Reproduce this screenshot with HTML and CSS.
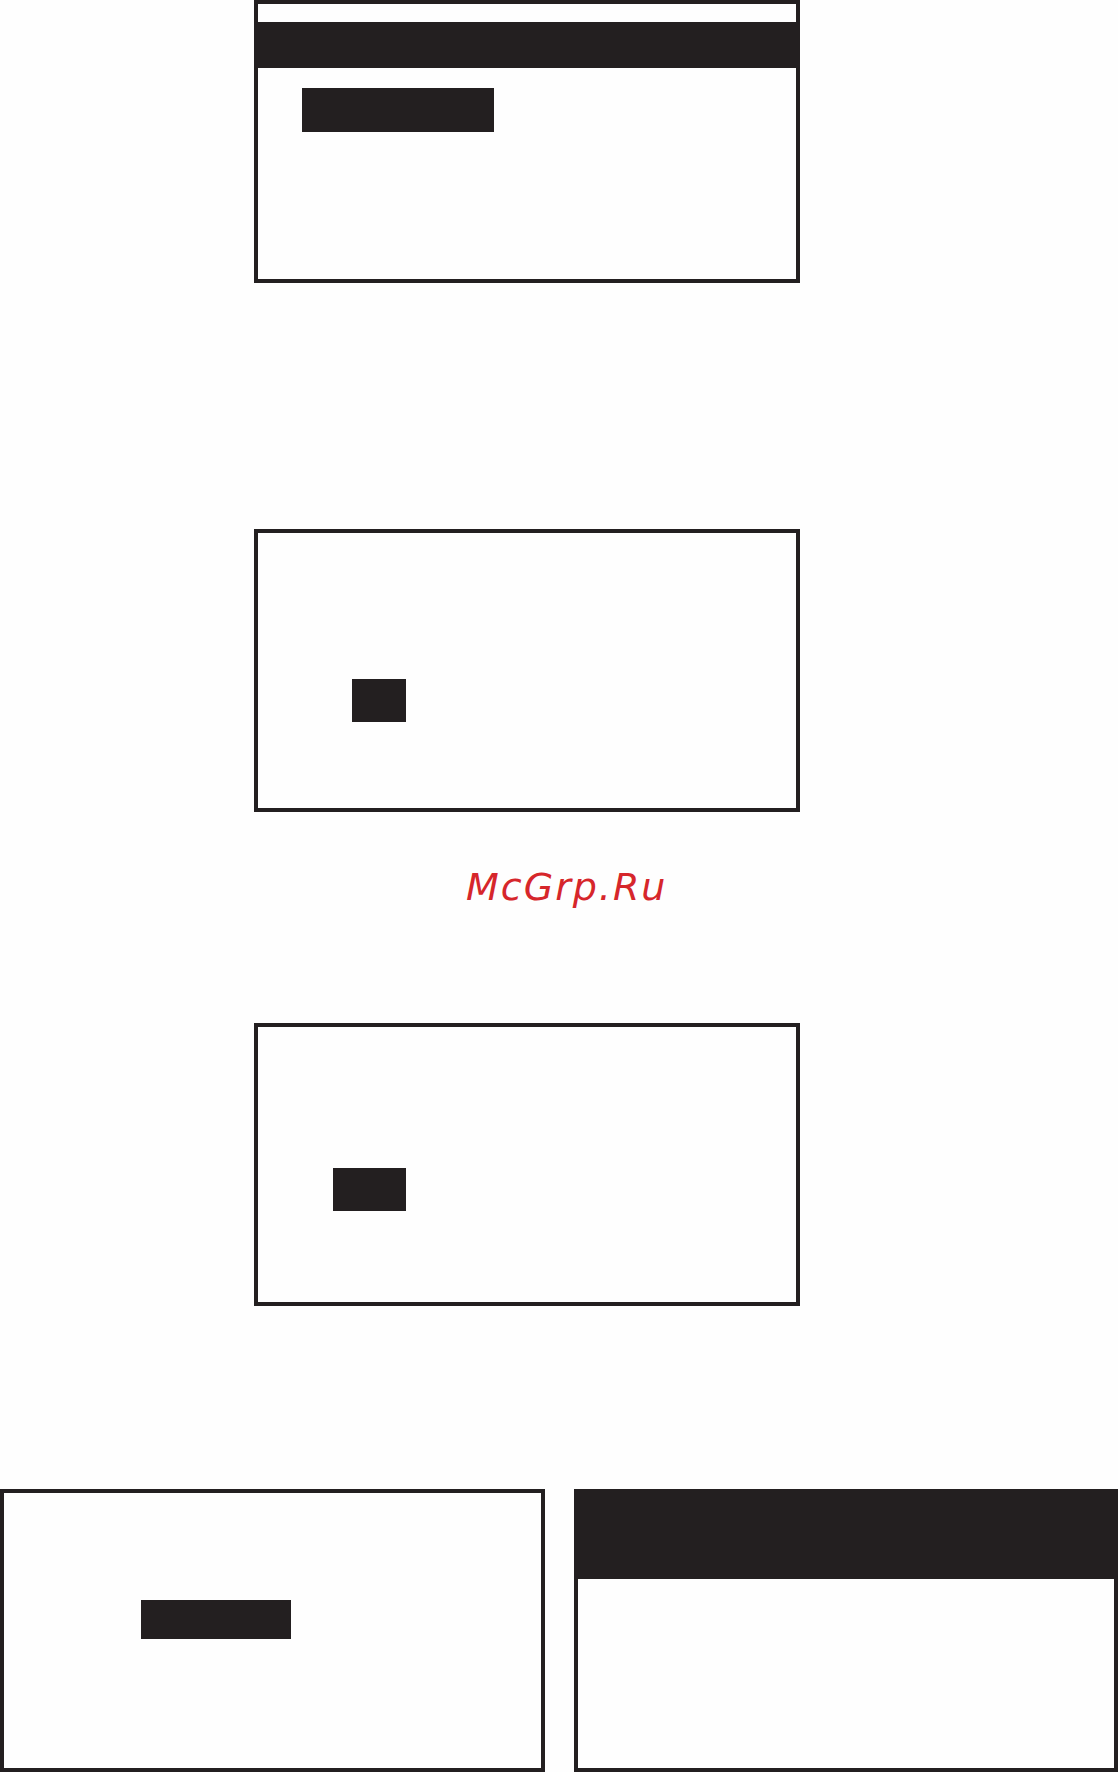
FILE: index.html
```html
<!DOCTYPE html>
<html lang="ru">
<head>
<meta charset="utf-8">
<title>McGrp.Ru</title>
<link rel="stylesheet" href="styles.css">
</head>
<body>
<main class="sheet">
  <section class="screen screen-menu">
    <div class="title-bar"></div>
    <div class="cursor cursor-wide"></div>
  </section>

  <section class="screen screen-digit">
    <div class="cursor cursor-one"></div>
  </section>

  <div class="watermark">McGrp.Ru</div>

  <section class="screen screen-pair">
    <div class="cursor cursor-two"></div>
  </section>

  <div class="screen-row">
    <section class="screen screen-half">
      <div class="cursor cursor-mid"></div>
    </section>
    <section class="screen screen-half screen-header">
      <div class="header-block"></div>
    </section>
  </div>
</main>
</body>
</html>
```

FILE: styles.css
```css
html, body {
  margin: 0;
  padding: 0;
  background: #fefefe;
}

.sheet {
  width: 1118px;
  height: 1772px;
  overflow: hidden;
  display: flex;
  flex-direction: column;
}

/* LCD screen frame */
.screen {
  box-sizing: border-box;
  width: 546px;
  height: 283px;
  border: 4px solid #231f20;
  background: #fefefe;
  margin-left: 254px;
  flex: none;
}

.cursor {
  background: #231f20;
}

/* first screen: title bar and highlighted item */
.title-bar {
  height: 46px;
  margin-top: 18px;
  margin-left: -4px;
  margin-right: -4px;
  background: #231f20;
}

.cursor-wide {
  width: 192px;
  height: 44px;
  margin-top: 20px;
  margin-left: 44px;
}

/* second screen: single digit cursor */
.screen-digit {
  margin-top: 246px;
}

.cursor-one {
  width: 54px;
  height: 43px;
  margin-top: 146px;
  margin-left: 94px;
}

.watermark {
  margin-top: 56px;
  padding-left: 466px;
  height: 38px;
  font-family: "DejaVu Sans", sans-serif;
  font-style: oblique;
  font-size: 38px;
  line-height: 38px;
  letter-spacing: 2px;
  color: #d6262b;
  flex: none;
}

/* third screen: two-digit cursor */
.screen-pair {
  margin-top: 117px;
}

.cursor-two {
  width: 73px;
  height: 43px;
  margin-top: 141px;
  margin-left: 75px;
}

/* bottom pair of screens */
.screen-row {
  margin-top: 183px;
  display: flex;
  gap: 29px;
  flex: none;
}

.screen-half {
  margin-left: 0;
  width: 545px;
}

.screen-half + .screen-half {
  width: 544px;
}

.cursor-mid {
  width: 150px;
  height: 39px;
  margin-top: 107px;
  margin-left: 137px;
}

.header-block {
  height: 86px;
  background: #231f20;
}
```
